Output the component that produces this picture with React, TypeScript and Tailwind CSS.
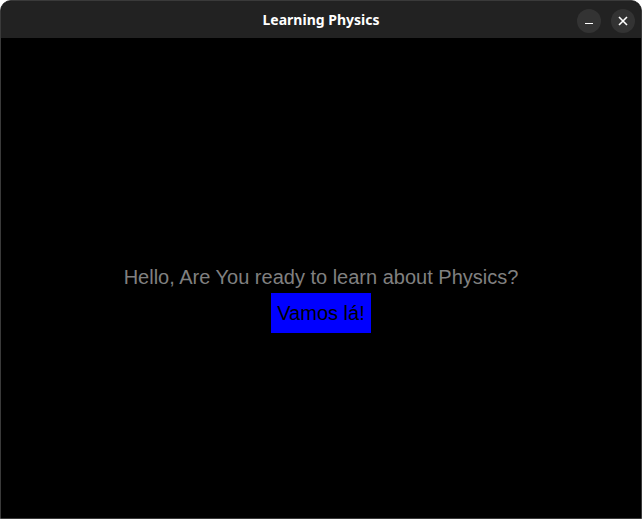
import React from 'react';

const App: React.FC = () => {
  return (
    <div className="w-[642px] h-[519px] bg-white">
      <div className="flex flex-col w-full h-full rounded-t-[11px] overflow-hidden border border-[#3a3a3a] bg-black">
        <div className="relative flex items-center justify-center h-[37px] shrink-0 bg-[#222222]">
          <span className="text-[14px] font-bold text-white font-['Noto_Sans',sans-serif]">Learning Physics</span>
          <div className="absolute right-[6px] top-[8px] flex gap-[10px]">
            <button className="flex items-center justify-center w-[24px] h-[24px] rounded-full bg-[#333333]">
              <span className="block w-[8px] h-[1px] mt-[5px] bg-white"></span>
            </button>
            <button className="flex items-center justify-center w-[24px] h-[24px] rounded-full bg-[#333333]">
              <svg width="10" height="10" viewBox="0 0 10 10">
                <path d="M1 1L9 9M9 1L1 9" stroke="white" strokeWidth="1.6" />
              </svg>
            </button>
          </div>
        </div>
        <div className="flex flex-1 flex-col items-center justify-center pt-[42px] font-['Liberation_Sans',Arial,sans-serif]">
          <p className="text-[20px] leading-[24px] text-[#808080]">Hello, Are You ready to learn about Physics?</p>
          <button className="mt-[4px] w-[100px] h-[40px] bg-[#0000ff] text-black text-[20px]">Vamos lá!</button>
        </div>
      </div>
    </div>
  );
};

export default App;
